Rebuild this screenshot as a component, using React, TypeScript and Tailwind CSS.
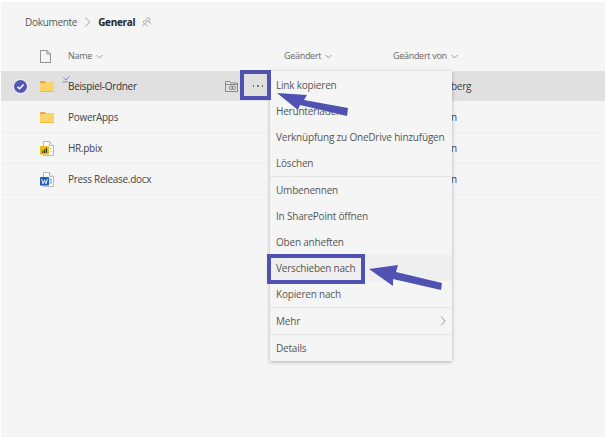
import React from "react";

const font = { fontFamily: '"Open Sans", "Noto Sans", sans-serif' };

function Chevron({ className = "" }: { className?: string }) {
  return (
    <svg width="7" height="5" viewBox="0 0 7 5" className={className}>
      <path d="M0.5 1 L3.5 4 L6.5 1" fill="none" stroke="#777" strokeWidth="0.7" />
    </svg>
  );
}

function Folder() {
  return (
    <svg width="14" height="11" viewBox="0 0 14 11">
      <path d="M0 1 a1 1 0 0 1 1-1 h3.5 l1.5 1.5 h8 v1 h-14z" fill="#e8a93a" />
      <path d="M0 2.5 h5 l1.2-1 h7.8 v9 a0.5 0.5 0 0 1-.5.5 h-13 a0.5 0.5 0 0 1-.5-.5z" fill="#fdd564" />
      <rect x="0" y="10" width="14" height="1" fill="#f0b84a" />
    </svg>
  );
}

function Pbix() {
  return (
    <svg width="14" height="15" viewBox="0 0 14 15">
      <path d="M3.5 .5 h6 l4 4 v10 h-10z" fill="#fff" stroke="#a8a8a8" strokeWidth="0.8" />
      <path d="M9.5 .5 v4 h4" fill="#eee" stroke="#a8a8a8" strokeWidth="0.8" />
      <circle cx="10.5" cy="7.5" r="0.8" fill="#bbb" />
      <circle cx="11" cy="10.5" r="0.8" fill="#ccc" />
      <rect x="0" y="5" width="9" height="8.5" rx="0.6" fill="#e9bc0f" />
      <rect x="2.2" y="9.5" width="1.2" height="2.5" fill="#4a3d05" />
      <rect x="4" y="8.3" width="1.2" height="3.7" fill="#4a3d05" />
      <rect x="5.8" y="7" width="1.2" height="5" fill="#4a3d05" />
    </svg>
  );
}

function Word() {
  return (
    <svg width="14" height="15" viewBox="0 0 14 15">
      <path d="M3.5 .5 h6 l4 4 v10 h-10z" fill="#fff" stroke="#a8a8a8" strokeWidth="0.8" />
      <path d="M9.5 .5 v4 h4" fill="#eee" stroke="#a8a8a8" strokeWidth="0.8" />
      <path d="M9.5 7 h2.5 M9.5 9 h2.5 M9.5 11 h2.5" stroke="#5b9bd5" strokeWidth="1" />
      <rect x="0" y="5" width="9" height="8.5" rx="0.6" fill="#1f5fb4" />
      <path d="M1.7 7 L3 11.8 L4.5 8 L6 11.8 L7.3 7" fill="none" stroke="#fff" strokeWidth="0.9" />
    </svg>
  );
}

function Check() {
  return (
    <svg width="15" height="15" viewBox="0 0 15 15">
      <circle cx="7.5" cy="7.5" r="7" fill="#5558af" stroke="#fff" strokeWidth="1" />
      <path d="M4.5 7.8 L6.6 9.8 L10.6 5.5" fill="none" stroke="#fff" strokeWidth="1.4" />
    </svg>
  );
}

function Row({ name, by, icon, selected }: { name: string; by: string; icon: React.ReactNode; selected?: boolean }) {
  return (
    <div
      className={
        "flex items-center h-[31px] border-b text-[10px] tracking-[-0.3px] " +
        (selected ? "bg-[#e0e0e0] border-[#f5f5f5] font-medium text-[#333]" : "border-[#eeeeee] text-[#444]")
      }
    >
      <div className="w-[39px] pl-[12px] flex items-center">{selected && <Check />}</div>
      <div className="w-[28px] flex items-center">{icon}</div>
      <div className="w-[157px] relative whitespace-nowrap">
        {selected && (
          <svg width="8" height="8" viewBox="0 0 7 7" className="absolute left-[-6px] top-[-4px]">
            <path d="M1 2 L3.5 4.5 L6.5 1 M0.5 6 H5" fill="none" stroke="#7f80c8" strokeWidth="0.8" />
          </svg>
        )}
        {name}
      </div>
      <div className="w-[21px] flex items-center">
        {selected && (
          <svg width="13" height="11" viewBox="0 0 13 11">
            <path d="M.5 10.5 V.5 h4 l1.2 1.5 h6.8 v8.5z M.5 3.5 h12" fill="none" stroke="#666" strokeWidth="0.7" />
            <circle cx="6" cy="6.8" r="1.8" fill="none" stroke="#666" strokeWidth="0.7" />
            <circle cx="8.8" cy="6.8" r="1.8" fill="none" stroke="#666" strokeWidth="0.7" />
          </svg>
        )}
      </div>
      <div className="w-[24px] flex justify-center items-center gap-[2px]">
        {selected && (
          <>
            <span className="w-[1.5px] h-[1.5px] rounded-full bg-[#555]" />
            <span className="w-[1.5px] h-[1.5px] rounded-full bg-[#555] ml-[1px]" />
            <span className="w-[1.5px] h-[1.5px] rounded-full bg-[#555] ml-[1px]" />
          </>
        )}
      </div>
      <div className="ml-[181px] whitespace-nowrap font-normal text-[#444]">{by}</div>
    </div>
  );
}

function MenuItem({ label, hover, more }: { label: string; hover?: boolean; more?: boolean }) {
  return (
    <div className={"h-[26px] flex items-center justify-between pl-[6px] pr-[6px] whitespace-nowrap " + (hover ? "bg-[#efefef]" : "")}>
      <span>{label}</span>
      {more && (
        <svg width="6" height="10" viewBox="0 0 6 10">
          <path d="M1 .5 L5 5 L1 9.5" fill="none" stroke="#888" strokeWidth="0.8" />
        </svg>
      )}
    </div>
  );
}

function Sep() {
  return <div className="h-[1px] bg-[#e4e4e4]" />;
}

export default function App() {
  return (
    <div className="relative w-[605px] h-[437px] overflow-hidden bg-white pl-[1px] pt-[2px]" style={font}>
      <div className="h-[435px] bg-[#f5f5f5]">
        <div className="h-[38px] flex items-center pl-[24px] text-[#555] text-[10px] tracking-[-0.3px] pt-[2px]">
          <span>Dokumente</span>
          <svg width="7" height="10" viewBox="0 0 7 10" className="mx-[7px]">
            <path d="M1 .5 L6 5 L1 9.5" fill="none" stroke="#888" strokeWidth="0.7" />
          </svg>
          <span className="font-bold text-[#252525]">General</span>
          <svg width="9" height="10" viewBox="0 0 9 10" className="ml-[7px]">
            <circle cx="6.3" cy="2.3" r="1.7" fill="none" stroke="#888" strokeWidth="0.6" />
            <circle cx="2.8" cy="5" r="1.5" fill="none" stroke="#888" strokeWidth="0.6" />
            <path d="M.5 9.5 c0-3 4.5-3 4.5 0 M5.5 5 c2-1 3 .5 3 2.5" fill="none" stroke="#888" strokeWidth="0.6" />
          </svg>
        </div>
        <div className="h-[31px] flex items-center text-[#666] text-[9px] tracking-[-0.3px] pt-[1px]">
          <div className="w-[39px]" />
          <div className="w-[28px] flex items-center">
            <svg width="11" height="13" viewBox="0 0 11 13">
              <path d="M.5 .5 h6.5 l3.5 3.5 v8.5 h-10z M7 .5 v3.5 h3.5" fill="none" stroke="#777" strokeWidth="0.8" />
            </svg>
          </div>
          <div className="w-[216px] flex items-center gap-[4px]">
            Name <Chevron />
          </div>
          <div className="w-[109px] flex items-center gap-[4px]">
            Geändert <Chevron />
          </div>
          <div className="flex items-center gap-[4px]">
            Geändert von <Chevron />
          </div>
        </div>
        <Row name="Beispiel-Ordner" by="berg" icon={<Folder />} selected />
        <Row name="PowerApps" by="n" icon={<Folder />} />
        <Row name="HR.pbix" by="n" icon={<Pbix />} />
        <Row name="Press Release.docx" by="n" icon={<Word />} />
      </div>

      <div className="absolute left-[270px] top-[71px] w-[182px] bg-[#f5f5f5] shadow-[0_1px_4px_rgba(0,0,0,0.28)] text-[10px] tracking-[-0.2px] text-[#555]">
        <div className="pt-[1px]">
          <MenuItem label="Link kopieren" />
          <MenuItem label="Herunterladen" />
          <MenuItem label="Verknüpfung zu OneDrive hinzufügen" />
          <MenuItem label="Löschen" />
        </div>
        <Sep />
        <MenuItem label="Umbenennen" />
        <MenuItem label="In SharePoint öffnen" />
        <MenuItem label="Oben anheften" />
        <MenuItem label="Verschieben nach" hover />
        <MenuItem label="Kopieren nach" />
        <Sep />
        <MenuItem label="Mehr" more />
        <Sep />
        <MenuItem label="Details" />
      </div>

      <div className="absolute left-[240px] top-[70px] w-[31px] h-[30px] border-[4px] border-[#4f52b2]" />
      <div className="absolute left-[267px] top-[254px] w-[98px] h-[30px] border-[4px] border-[#4f52b2]" />
      <svg width="605" height="437" viewBox="0 0 605 437" className="absolute left-0 top-0 pointer-events-none">
        <polygon points="277,93 307,95 304,100 348,108 347,116 300,105 298,110" fill="#4f52b2" />
        <polygon points="369,269 398,265 396,272 442,283 441,290 393,279 393,286" fill="#4f52b2" />
      </svg>
    </div>
  );
}
